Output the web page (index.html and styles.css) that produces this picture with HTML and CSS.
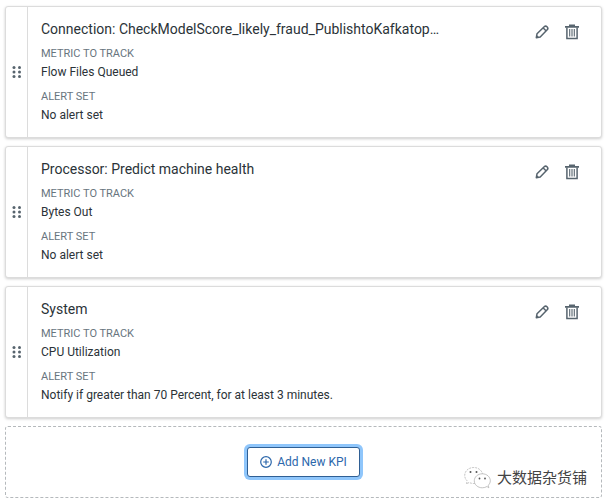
FILE: index.html
```html
<!DOCTYPE html>
<html lang="en">
<head>
    <meta charset="UTF-8">
    <meta name="viewport" content="width=device-width, initial-scale=1.0">
    <title>KPIs</title>
    <link rel="stylesheet" href="styles.css">
</head>
<body>
    <!-- shared icons -->
    <svg class="icon-defs" aria-hidden="true">
        <symbol id="icon-drag" viewBox="0 0 10 14">
            <g fill="currentColor">
                <circle cx="2" cy="2.5" r="1.5"/><circle cx="7.5" cy="2.5" r="1.5"/>
                <circle cx="2" cy="7" r="1.5"/><circle cx="7.5" cy="7" r="1.5"/>
                <circle cx="2" cy="11.5" r="1.5"/><circle cx="7.5" cy="11.5" r="1.5"/>
            </g>
        </symbol>
        <symbol id="icon-edit" viewBox="0 0 16 16">
            <g fill="none" stroke="currentColor" stroke-width="1.5" stroke-linejoin="round">
                <path d="M2.300 13.700 3 9.800 10.200 2.800a2 2 0 0 1 2.800 0l.2.2a2 2 0 0 1 0 2.800L6.200 13Z"/>
                <path d="M9.200 4l2.800 2.800"/>
            </g>
            <path d="M2 14l.6-3.200 2.600 2.600z" fill="currentColor"/>
        </symbol>
        <symbol id="icon-delete" viewBox="0 0 16 16">
            <path d="M5 .5h6v1.600h4v1.600H1V2.100h4z" fill="currentColor"/>
            <path d="M2.900 3.500v11h10.200v-11" fill="none" stroke="currentColor" stroke-width="1.500"/>
            <path d="M5.700 5v7.500M8 5v7.500M10.300 5v7.500" fill="none" stroke="currentColor" stroke-width="1.100"/>
        </symbol>
    </svg>

    <main class="kpi-list">
        <section class="kpi-card">
            <button class="drag-handle" aria-label="Reorder"><svg><use href="#icon-drag"/></svg></button>
            <div class="kpi-content">
                <h2 class="kpi-title">Connection: CheckModelScore_likely_fraud_PublishtoKafkatop…</h2>
                <dl class="kpi-details">
                    <dt>METRIC TO TRACK</dt>
                    <dd>Flow Files Queued</dd>
                    <dt>ALERT SET</dt>
                    <dd>No alert set</dd>
                </dl>
            </div>
            <div class="kpi-actions">
                <button aria-label="Edit"><svg><use href="#icon-edit"/></svg></button>
                <button aria-label="Delete"><svg><use href="#icon-delete"/></svg></button>
            </div>
        </section>

        <section class="kpi-card">
            <button class="drag-handle" aria-label="Reorder"><svg><use href="#icon-drag"/></svg></button>
            <div class="kpi-content">
                <h2 class="kpi-title">Processor: Predict machine health</h2>
                <dl class="kpi-details">
                    <dt>METRIC TO TRACK</dt>
                    <dd>Bytes Out</dd>
                    <dt>ALERT SET</dt>
                    <dd>No alert set</dd>
                </dl>
            </div>
            <div class="kpi-actions">
                <button aria-label="Edit"><svg><use href="#icon-edit"/></svg></button>
                <button aria-label="Delete"><svg><use href="#icon-delete"/></svg></button>
            </div>
        </section>

        <section class="kpi-card">
            <button class="drag-handle" aria-label="Reorder"><svg><use href="#icon-drag"/></svg></button>
            <div class="kpi-content">
                <h2 class="kpi-title">System</h2>
                <dl class="kpi-details">
                    <dt>METRIC TO TRACK</dt>
                    <dd>CPU Utilization</dd>
                    <dt>ALERT SET</dt>
                    <dd>Notify if greater than 70 Percent, for at least 3 minutes.</dd>
                </dl>
            </div>
            <div class="kpi-actions">
                <button aria-label="Edit"><svg><use href="#icon-edit"/></svg></button>
                <button aria-label="Delete"><svg><use href="#icon-delete"/></svg></button>
            </div>
        </section>

        <div class="add-area">
            <button class="add-button">
                <svg viewBox="0 0 12 12" fill="none" stroke="currentColor" stroke-width="1.2">
                    <circle cx="6" cy="6" r="5.300"/>
                    <path d="M6 3.200v5.600M3.200 6h5.600"/>
                </svg>
                Add New KPI
            </button>
            <div class="watermark">
                <svg viewBox="0 0 27 23" fill="#fff" stroke="#aaa" stroke-width=".7">
                    <path d="M5 16.500 2.500 18l.7-3.100C1.600 13.500.7 11.600.7 9.500.7 4.900 4.700 1.500 9.700 1.500s9 3.400 9 8-4 8-9 8c-1.700 0-3.300-.4-4.700-1z" stroke-dasharray="2 1"/>
                    <path d="M23 20.500l1.800 1.300-.5-2.600c1.300-1.200 2-2.700 2-4.400 0-3.900-3.500-7-8-7s-8 3.100-8 7 3.500 7 8 7c1.700 0 3.300-.5 4.700-1.300z"/>
                    <g fill="#555" stroke="none">
                        <circle cx="6.500" cy="6" r="1"/><circle cx="12.500" cy="6" r="1"/>
                        <circle cx="15.500" cy="12.500" r=".9"/><circle cx="21" cy="12.500" r=".9"/>
                    </g>
                </svg>
                <span lang="zh">大数据杂货铺</span>
            </div>
        </div>
    </main>
</body>
</html>
```
FILE: styles.css
```css
* {
    box-sizing: border-box;
}
body {
    margin: 0;
    padding: 6px 5px;
    background: #fff;
    color: #2b3338;
    font-family: Roboto, "Liberation Sans", sans-serif;
    font-size: 12px;
}
button {
    padding: 0;
    border: none;
    background: none;
    color: #57646e;
    font: inherit;
    cursor: pointer;
}
svg {
    display: block;
}
.icon-defs {
    display: none;
}
.kpi-list {
    display: flex;
    flex-direction: column;
    gap: 8px;
}
.kpi-card {
    display: flex;
    border: 1px solid #dcdcdc;
    border-radius: 3px;
    background: #fff;
    box-shadow: 0 1px 3px rgba(0, 0, 0, 0.2);
}
.drag-handle {
    display: flex;
    flex: none;
    align-items: center;
    justify-content: center;
    width: 22px;
    border-right: 1px solid #dcdcdc;
    cursor: grab;
}
.drag-handle svg {
    width: 10px;
    height: 14px;
}
.kpi-content {
    flex: 1;
    min-width: 0;
    padding: 12px 13px;
}
.kpi-title {
    margin: 0 0 7px;
    overflow: hidden;
    font-size: 14px;
    font-weight: 400;
    line-height: 20px;
    text-overflow: ellipsis;
    white-space: nowrap;
}
.kpi-details {
    margin: 0;
}
.kpi-details dt {
    color: #68757e;
    font-size: 11px;
    line-height: 16px;
}
.kpi-details dd {
    margin: 0;
    line-height: 20px;
}
.kpi-details dd + dt {
    margin-top: 7px;
}
.kpi-actions {
    display: flex;
    align-items: flex-start;
    gap: 14px;
    padding: 17px 21px 0 0;
}
.kpi-actions svg {
    width: 16px;
    height: 16px;
}
.add-area {
    position: relative;
    display: flex;
    justify-content: center;
    padding: 20px;
    border: 1px dashed #b5b9bc;
    border-radius: 3px;
}
.add-button {
    display: flex;
    align-items: center;
    gap: 5px;
    padding: 4px 12px;
    border: 1px solid #2f5f94;
    border-radius: 3px;
    background: #fff;
    box-shadow: 0 0 0 3px #8fc6fb;
    color: #2c67ab;
    line-height: 20px;
}
.add-button svg {
    width: 12px;
    height: 12px;
}
.watermark {
    position: absolute;
    right: 14px;
    bottom: 8px;
    display: flex;
    align-items: center;
    gap: 6px;
    color: #444;
    font-family: "Noto Sans CJK SC", sans-serif;
    font-size: 15px;
    line-height: 24px;
}
.watermark svg {
    width: 27px;
    height: 23px;
}
```
